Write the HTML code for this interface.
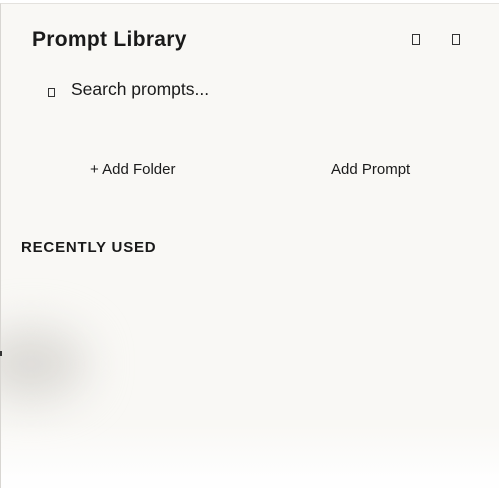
<!DOCTYPE html>
<html><head><style>
body{margin:0;width:499px;height:488px;background:#fff;overflow:hidden;position:relative;font-family:"Liberation Sans",sans-serif;}
.panel{position:absolute;left:0;top:3px;width:499px;height:485px;background:#f9f8f5;border-top:1px solid #e4e2de;border-left:1px solid #d8d6d2;box-sizing:border-box;overflow:hidden}
.t{position:absolute;color:#1a1a1a;white-space:nowrap}
.blob{position:absolute;left:-25px;top:325px;width:110px;height:70px;border-radius:50%;background:#dcdad6;filter:blur(22px)}
.fade{position:absolute;left:0;top:420px;width:499px;height:80px;background:linear-gradient(rgba(249,248,245,0),#fefefe 70%)}
.box{display:inline-block;width:8px;height:11px;border:1px solid #333;box-sizing:border-box}
</style></head><body>
<div class="panel">
<div class="blob"></div>
<div class="fade"></div>
<div class="t" style="left:31px;top:24px;font-size:21px;font-weight:bold;letter-spacing:0.3px;">Prompt Library</div>
<div class="t" style="left:411px;top:28px;"><span class="box"></span></div>
<div class="t" style="left:451px;top:28px;"><span class="box"></span></div>
<div class="t" style="left:47px;top:80px;"><span class="box" style="width:7px;height:9px"></span></div>
<div class="t" style="left:70px;top:75px;font-size:17.5px;">Search prompts...</div>
<div class="t" style="left:89px;top:157px;font-size:15px;">+ Add Folder</div>
<div class="t" style="left:330px;top:157px;font-size:15px;">Add Prompt</div>
<div class="t" style="left:20px;top:235px;font-size:15px;font-weight:bold;letter-spacing:0.8px;">RECENTLY USED</div>
</div>
<div style="position:absolute;left:0;top:351px;width:2px;height:5px;background:#333"></div>
</body></html>
